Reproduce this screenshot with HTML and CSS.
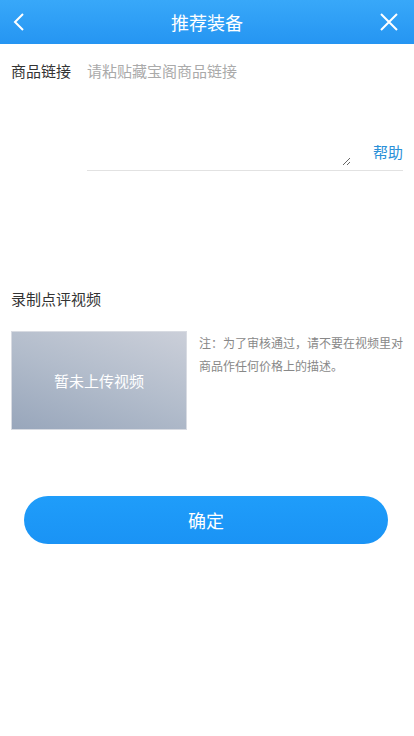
FILE: index.html
```html
<!DOCTYPE html>
<html lang="zh-CN">

<head>
    <meta charset="UTF-8">
    <title>推荐装备</title>
    <link rel="stylesheet" href="styles.css">
</head>

<body>
    <div class="header">
        <a class="header-btn back" href="#">
            <svg width="14" height="20" viewBox="0 0 14 20">
                <path d="M11 2 L3 10 L11 18" fill="none" stroke="#fff" stroke-width="2" />
            </svg>
        </a>
        <h1>推荐装备</h1>
        <a class="header-btn close" href="#">
            <svg width="20" height="20" viewBox="0 0 20 20">
                <path d="M2 2 L18 18 M18 2 L2 18" fill="none" stroke="#fff" stroke-width="2" />
            </svg>
        </a>
    </div>

    <div class="form">
        <div class="link-row">
            <label class="label" for="link">商品链接</label>
            <div class="link-box">
                <textarea id="link" placeholder="请粘贴藏宝阁商品链接"></textarea>
                <a class="help" href="#">帮助</a>
            </div>
        </div>

        <div class="video-section">
            <div class="label">录制点评视频</div>
            <div class="video-row">
                <div class="video-thumb">暂未上传视频</div>
                <p class="note">注：为了审核通过，请不要在视频里对商品作任何价格上的描述。</p>
            </div>
        </div>

        <button class="submit">确定</button>
    </div>
</body>

</html>
```

FILE: styles.css
```css
body {
    margin: 0;
    font-family: "Noto Sans CJK SC", "Noto Sans", sans-serif;
    background-color: #fff;
    color: #333;
}

.header {
    height: 44px;
    display: flex;
    align-items: center;
    justify-content: space-between;
    background: linear-gradient(180deg, #38a8f9 0%, #2595f2 100%);
}

.header h1 {
    margin: 0;
    font-size: 18px;
    font-weight: normal;
    color: #fff;
}

.header-btn {
    width: 44px;
    height: 44px;
    display: flex;
    align-items: center;
    justify-content: center;
}

.back {
    justify-content: flex-start;
    padding-left: 12px;
    box-sizing: border-box;
}

.close {
    justify-content: flex-end;
    padding-right: 15px;
    box-sizing: border-box;
}

.form {
    padding: 0 11px;
}

.link-row {
    display: flex;
    padding-top: 16px;
}

.label {
    font-size: 15px;
    line-height: 22px;
    color: #333;
}

.link-row .label {
    width: 76px;
    flex-shrink: 0;
}

.link-box {
    flex: 1;
    display: flex;
    align-items: flex-end;
    border-bottom: 1px solid #e2e2e2;
}

.link-box textarea {
    flex: 1;
    height: 106px;
    margin: 0 22px 4px 0;
    padding: 0;
    border: none;
    outline: none;
    font-family: inherit;
    font-size: 15px;
    line-height: 22px;
    color: #333;
}

.link-box textarea::placeholder {
    color: #aaa;
}

.help {
    font-size: 15px;
    color: #2a90d8;
    text-decoration: none;
    margin-bottom: 8px;
}

.video-section {
    margin-top: 117px;
}

.video-row {
    display: flex;
    gap: 12px;
    margin-top: 21px;
}

.video-thumb {
    width: 176px;
    height: 99px;
    flex-shrink: 0;
    display: flex;
    align-items: center;
    justify-content: center;
    font-size: 15px;
    color: #fff;
    background: linear-gradient(200deg, #cbcfd9 0%, #b2bccb 50%, #98a6bb 100%);
    border: 1px solid #d8dbe2;
    box-sizing: border-box;
}

.note {
    margin: 0;
    font-size: 12px;
    line-height: 23px;
    color: #888;
}

.submit {
    display: block;
    width: 364px;
    height: 48px;
    margin: 66px 0 0 13px;
    border: none;
    border-radius: 24px;
    background: linear-gradient(180deg, #1f9dfa 0%, #1a93f5 100%);
    color: #fff;
    font-family: inherit;
    font-size: 18px;
}
```
